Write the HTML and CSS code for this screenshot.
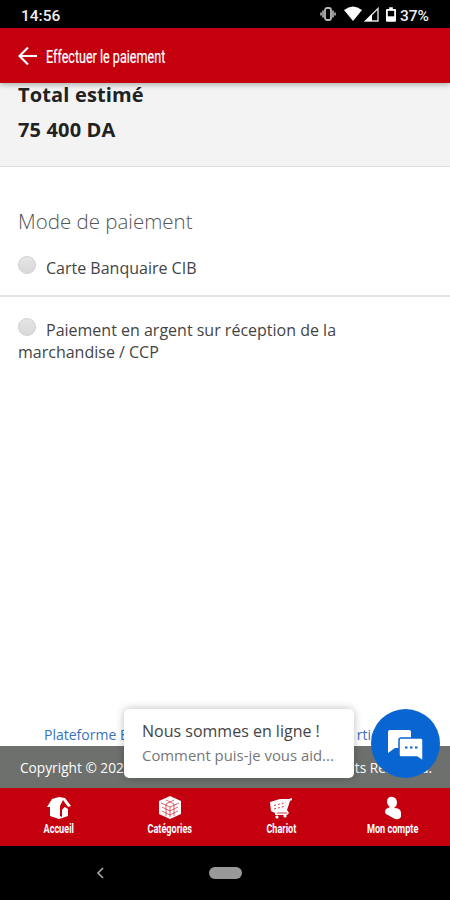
FILE: index.html
```
<!DOCTYPE html>
<html lang="fr">
<head>
<meta charset="utf-8">
<title>Effectuer le paiement</title>
<link rel="stylesheet" href="styles.css">
</head>
<body>
<div class="screen">
  <header class="status">
    <span class="clock">14:56</span>
    <svg class="vibrate" width="16" height="14" viewBox="0 0 16 14" fill="none" stroke="#b8b8b8"><path d="M1 5.500v3M3 3.500v7M13 3.500v7M15 5.500v3" stroke-width="1.6"/><rect x="5" y="1" width="6" height="12" rx="2" stroke-width="1.8"/></svg>
    <svg class="wifi" width="18" height="16" viewBox="0 0 18 16"><path d="M0 4Q9-3 18 4L9 15Z" fill="#fff"/></svg>
    <svg class="signal" width="15" height="15" viewBox="0 0 15 15"><path d="M1.5 14L14 1.5V14Z" fill="none" stroke="#ddd" stroke-width="1.4"/><path d="M1 14L8 7V14Z" fill="#fff"/></svg>
    <svg class="battery" width="10" height="15" viewBox="0 0 11 16"><path d="M3.5 0h4v2H10q1 0 1 1v12q0 1-1 1H1q-1 0-1-1V3q0-1 1-1h2.500Z" fill="#fff"/><path d="M2 4h7v6H2Z"/></svg>
    <span class="percent">37%</span>
  </header>
  <div class="appbar">
    <svg class="back" width="20" height="20" viewBox="0 0 20 20" fill="none" stroke="#fff" stroke-width="2.2"><path d="M19 10H2M10 1.500L1.500 10L10 18.500"/></svg>
    <h1 class="title">Effectuer le paiement</h1>
  </div>
  <section class="total">
    <div>Total estimé</div>
    <div>75 400 DA</div>
  </section>
  <main class="payment">
    <h2 class="heading">Mode de paiement</h2>
    <label class="option"><i class="radio"></i><span>Carte Banquaire CIB</span></label>
    <label class="option second"><i class="radio"></i><span>Paiement en argent sur réception de la</span><br><span>marchandise / CCP</span></label>
  </main>
  <div class="links"><a>Plateforme E</a><a class="partial">rtic</a></div>
  <footer class="copyright"><span>Copyright © 202</span><span class="rights">ts Reserved.</span></footer>
  <nav class="tabs">
    <div class="tab"><svg width="24" height="24" viewBox="0 0 24 24"><path d="M0 11L5 3L12 1L18 2L24 10L21 11V20L12 23L3 20V11Z" fill="#fff"/><path d="M13 10L16 4L21 11V13L18 11L15 14V21L13 20Z" fill="#c4000f"/><path d="M15 14l3-3v8l-3 2Z" fill="#fff"/></svg><span class="accueil">Accueil</span></div>
    <div class="tab"><svg width="24" height="24" viewBox="0 0 24 24"><path d="M12 0L23 5V18L12 23L1 18V5Z" fill="#fff"/><path d="M3 7L12 11L21 7M12 11V21M8 4L16 8V20M16 4L8 8V20M4 11L12 15L20 11M4 15L12 19L20 15" fill="none" stroke="#c4000f" stroke-width=".6"/></svg><span class="categories">Catégories</span></div>
    <div class="tab"><svg width="24" height="24" viewBox="0 0 24 24"><path d="M1 6L11 3L20 3L23 2V4L21 5L18 14L20 17L18 19L6 19L6 17L2 15Z" fill="#fff"/><path d="M5 9.500l12-3M5 13l12-3" stroke="#c4000f" stroke-width=".8" stroke-dasharray="2 2"/><path d="M8 17h10" stroke="#c4000f" stroke-width=".8"/><circle cx="8" cy="21" r="1.600" fill="#fff"/><circle cx="16" cy="20" r="1.600" fill="#fff"/></svg><span class="chariot">Chariot</span></div>
    <div class="tab"><svg width="24" height="24" viewBox="0 0 24 24"><path d="M6 5Q7 0 12 1Q16 2 16 7Q16 10 13 12Q20 12 20 17V21Q18 24 14 23L5 18Q3 16 5 13L9 11Q6 9 6 5Z" fill="#fff"/></svg><span class="compte">Mon compte</span></div>
  </nav>
  <div class="system">
    <svg width="8" height="12" viewBox="0 0 8 12" fill="none" stroke="#aaa" stroke-width="1.600"><path d="M7 1L2 6L7 11"/></svg>
    <i class="home"></i>
  </div>
  <aside class="bubble"><p class="online">Nous sommes en ligne !</p><p class="help">Comment puis-je vous aid...</p></aside>
  <button class="chat" aria-label="Chat"><svg width="36" height="32" viewBox="0 0 36 32"><path d="M2 0H21Q23 0 23 2V18H7L0 23V2Q0 0 2 0Z" fill="#fff"/><path d="M13 8H33Q35 8 35 10V31L29 27H13Q11 27 11 25V10Q11 8 13 8Z" fill="#fff" stroke="#0865d2" stroke-width="1.500"/><path d="M17 17.500h2.500M22 17.500h2.500M27 17.500h2.500" stroke="#0865d2" stroke-width="2"/></svg></button>
</div>
</body>
</html>
```

FILE: styles.css
```
* { box-sizing: border-box; }
body { margin: 0; font-family: "Open Sans", sans-serif; }
h1, h2, p { margin: 0; }
.screen { position: relative; width: 450px; height: 900px; overflow: hidden; display: flex; flex-direction: column; background: #fff; color: #444; }
.status { height: 28px; flex: none; display: flex; align-items: center; padding: 2px 21px 0; background: #000; color: #eee; font: 500 15.5px/26px Roboto, sans-serif; }
.status svg { flex: none; margin-top: -2px; }
.clock { width: 300px; padding-top: 2px; }
.percent { padding-top: 2px; }
.wifi { margin-left: 8px; }
.signal { margin-left: 2px; }
.battery { margin-left: 7px; }
.percent { margin-left: 4px; white-space: nowrap; }
.appbar { position: relative; z-index: 1; height: 55px; flex: none; display: flex; align-items: center; padding-left: 18px; background: #c4000f; box-shadow: 0 2px 5px #0004; }
.title { margin: 2px 0 0 8px; color: #fff; font: 400 18.5px/24px Roboto, sans-serif; -webkit-text-stroke: .2px #fff; white-space: nowrap; transform: scaleX(.68); transform-origin: left; }
.total { height: 84px; flex: none; padding: 0 18px; background: #f3f3f3; border-bottom: 1px solid #ddd; color: #222; font-size: 20px; font-weight: 700; line-height: 35px; letter-spacing: .15px; }
.total div:first-child { margin-top: -6px; }
.payment { height: 558px; flex: none; padding-top: 39px; }
.heading { padding-left: 18px; font-size: 20.5px; line-height: 30px; font-weight: 300; color: #555; }
.option { display: block; height: 61px; padding: 20px 18px 0; border-bottom: 2px solid #e5e5e5; font-size: 16px; line-height: 22px; white-space: nowrap; }
.option.second { height: 80px; padding-top: 21px; border: 0; }
.radio { display: inline-block; width: 18px; height: 18px; margin-right: 10px; border: 1px solid #d0d0d0; border-radius: 50%; background: linear-gradient(#e5e5e5, #d8d8d8); }
.links { height: 21px; flex: none; padding-left: 44px; display: flex; color: #3872bd; font-size: 14px; line-height: 20px; }
.partial { margin-left: 229px; }
.copyright { height: 42px; flex: none; display: flex; padding: 1px 0 0 20px; background: #6d706d; color: #fff; font-size: 13.7px; line-height: 42px; white-space: nowrap; }
.rights { margin-left: 231px; }
.tabs { height: 58px; flex: none; display: grid; grid-template-columns: 117px 106px 116px 107px; background: #c4000f; }
.tab { display: flex; flex-direction: column; align-items: center; padding-top: 8px; color: #fff; font: 700 13px/15px Roboto, sans-serif; white-space: nowrap; }
.tab span { transform: scaleX(.7); margin-top: 1px; }
.system { flex: 1; display: flex; align-items: center; background: #000; padding-left: 96px; }
.home { width: 33px; height: 12px; margin-left: 105px; border-radius: 6px; background: #999; }
.bubble { position: absolute; left: 124px; top: 709px; width: 230px; height: 69px; padding: 10px 18px; border-radius: 5px; background: #fff; box-shadow: 0 0 8px #0004; white-space: nowrap; }
.online { color: #444; font-size: 16px; line-height: 25px; }
.help { color: #777; font-size: 14.9px; line-height: 22px; }
.chat { position: absolute; left: 371px; top: 709px; width: 69px; height: 69px; padding: 7px 0 0; border: 0; border-radius: 50%; background: #0865d2; }
```
